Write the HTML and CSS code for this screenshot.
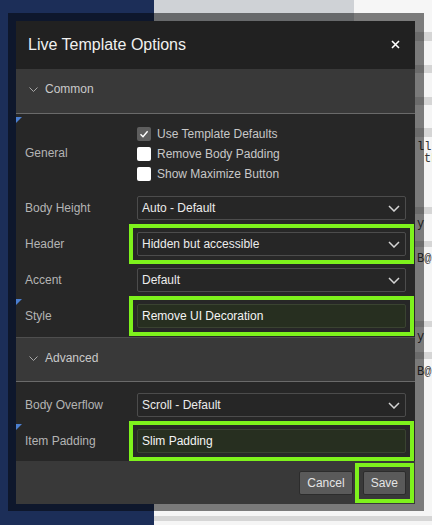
FILE: index.html
```html
<!DOCTYPE html>
<html lang="en">
<head>
<meta charset="utf-8">
<title>Live Template Options</title>
<link rel="stylesheet" href="styles.css">
</head>
<body>
<div class="page">
  <aside class="sidebar"></aside>
  <main class="main">
    <div class="topbar"><div class="tab"></div></div>
    <div class="content">
      <div class="bar h9 mt1"></div>
      <div class="bar h8 mt24"></div>
      <div class="bar h8 mt24"></div>
      <div class="bar h9 mt23"></div>
      <div class="code mt4">ll</div>
      <div class="code indent">th</div>
      <div class="bar h7 mt42"></div>
      <div class="code mt4">y</div>
      <div class="bar h6 mt11"></div>
      <div class="code mt6">B@</div>
      <div class="bar h6 mt56"></div>
      <div class="code mt4">y</div>
      <div class="bar h7 mt9"></div>
      <div class="code mt7">B@</div>
      <div class="bar h5 mt138"></div>
    </div>
  </main>
</div>

<div class="frame">
  <div class="dialog">
    <header class="titlebar">
      <h1 class="title">Live Template Options</h1>
      <button class="close" aria-label="Close">
        <svg width="9" height="9" viewBox="0 0 9 9"><path d="M1 1L8 8M8 1L1 8" stroke="#ffffff" stroke-width="1.6" fill="none"/></svg>
      </button>
    </header>

    <section class="region">
      <div class="region-head">
        <svg class="chev" width="9" height="5" viewBox="0 0 9 5"><path d="M0.5 0.5L4.5 4.5L8.5 0.5" fill="none" stroke="#a8a8a8" stroke-width="1"/></svg>
        <span>Common</span>
      </div>
      <div class="region-body">
        <div class="row row-general">
          <span class="marker"></span>
          <span class="lbl">General</span>
          <div class="checks">
            <div class="check">
              <span class="box checked"><svg width="14" height="14" viewBox="0 0 14 14"><path d="M3.5 7.2L6 9.7L10.6 4.3" fill="none" stroke="#ffffff" stroke-width="1.4"/></svg></span>
              <span>Use Template Defaults</span>
            </div>
            <div class="check"><span class="box"></span><span>Remove Body Padding</span></div>
            <div class="check"><span class="box"></span><span>Show Maximize Button</span></div>
          </div>
        </div>
        <div class="row">
          <span class="lbl">Body Height</span>
          <div class="select"><span>Auto - Default</span><svg width="12" height="7" viewBox="0 0 12 7"><path d="M1 1L6 6L11 1" fill="none" stroke="#d4d4d4" stroke-width="1.5"/></svg></div>
        </div>
        <div class="row">
          <span class="lbl">Header</span>
          <div class="select hl"><span>Hidden but accessible</span><svg width="12" height="7" viewBox="0 0 12 7"><path d="M1 1L6 6L11 1" fill="none" stroke="#d4d4d4" stroke-width="1.5"/></svg></div>
        </div>
        <div class="row">
          <span class="lbl">Accent</span>
          <div class="select"><span>Default</span><svg width="12" height="7" viewBox="0 0 12 7"><path d="M1 1L6 6L11 1" fill="none" stroke="#d4d4d4" stroke-width="1.5"/></svg></div>
        </div>
        <div class="row">
          <span class="marker"></span>
          <span class="lbl">Style</span>
          <div class="field hl"><span>Remove UI Decoration</span></div>
        </div>
      </div>
    </section>

    <section class="region region-second">
      <div class="region-head">
        <svg class="chev" width="9" height="5" viewBox="0 0 9 5"><path d="M0.5 0.5L4.5 4.5L8.5 0.5" fill="none" stroke="#a8a8a8" stroke-width="1"/></svg>
        <span>Advanced</span>
      </div>
      <div class="region-body region-body-adv">
        <div class="row">
          <span class="lbl">Body Overflow</span>
          <div class="select"><span>Scroll - Default</span><svg width="12" height="7" viewBox="0 0 12 7"><path d="M1 1L6 6L11 1" fill="none" stroke="#d4d4d4" stroke-width="1.5"/></svg></div>
        </div>
        <div class="row">
          <span class="marker"></span>
          <span class="lbl">Item Padding</span>
          <div class="field hl"><span>Slim Padding</span></div>
        </div>
      </div>
    </section>

    <footer class="footer">
      <button class="btn">Cancel</button>
      <button class="btn hl">Save</button>
    </footer>
  </div>
</div>
</body>
</html>
```

FILE: styles.css
```css
* { box-sizing: border-box; }

html, body {
  margin: 0;
  padding: 0;
  width: 432px;
  height: 525px;
  overflow: hidden;
  font-family: "Liberation Sans", Arial, Helvetica, sans-serif;
}

.page {
  display: flex;
  width: 432px;
  height: 525px;
}

.sidebar {
  width: 154px;
  flex: none;
  background: #1c2e58;
}

.main {
  flex: 1;
  display: flex;
  flex-direction: column;
  background: #f5f5f5;
  overflow: hidden;
}

.topbar {
  height: 31px;
  flex: none;
  background: #f6f6f6;
  display: flex;
}

.tab {
  width: 200px;
  background: #cfd2d6;
}

.content {
  display: flex;
  flex-direction: column;
  padding-left: 263px;
}

.bar {
  margin-left: -263px;
  background: #d6d6d6;
}
.h5 { height: 5px; }
.h6 { height: 6px; }
.h7 { height: 7px; }
.h8 { height: 8px; }
.h9 { height: 9px; }
.mt1 { margin-top: 1px; }
.mt4 { margin-top: 4px; }
.mt6 { margin-top: 6px; }
.mt7 { margin-top: 7px; }
.mt9 { margin-top: 9px; }
.mt11 { margin-top: 11px; }
.mt23 { margin-top: 23px; }
.mt24 { margin-top: 24px; }
.mt42 { margin-top: 42px; }
.mt56 { margin-top: 56px; }
.mt138 { margin-top: 138px; }

.code {
  font-family: "Liberation Mono", "DejaVu Sans Mono", monospace;
  font-size: 12px;
  line-height: 12px;
  color: #3a3a3a;
  white-space: nowrap;
}
.indent { padding-left: 7px; }

/* overlay frame around dialog */
.frame {
  position: absolute;
  left: 8px;
  top: 13px;
  width: 416px;
  height: 498px;
  padding: 8px 9px 7px 8px;
  background: rgba(0, 0, 0, 0.5);
}

.dialog {
  width: 399px;
  height: 483px;
  display: flex;
  flex-direction: column;
  background: #272727;
}

.titlebar {
  height: 48px;
  flex: none;
  background: #212121;
  display: flex;
  align-items: center;
  justify-content: space-between;
  padding: 0 14px 0 12px;
}

.title {
  margin: 0;
  font-size: 16px;
  font-weight: normal;
  color: #f0f0f0;
}

.close {
  border: 0;
  background: none;
  padding: 0;
  width: 11px;
  height: 11px;
  display: flex;
  align-items: center;
  justify-content: center;
  margin-bottom: 2px;
}

.region-head {
  height: 45px;
  background: #393939;
  border-bottom: 1px solid #6a6a6a;
  display: flex;
  align-items: center;
  padding-left: 13px;
  gap: 7px;
  font-size: 12px;
  color: #c9c9c9;
  padding-bottom: 4px;
}

.chev { margin-top: 1px; }

.region-second .region-head {
  border-top: 1px solid #4e4e4e;
}

.region-body {
  padding: 2px 0 3px;
  background: #272727;
}

.region-body-adv {
  padding: 5px 0 2px;
}

.row {
  position: relative;
  display: grid;
  grid-template-columns: 121px 1fr;
  align-items: center;
  height: 36px;
  padding-right: 9px;
}

.row-general {
  height: 74px;
}

.marker {
  position: absolute;
  left: 0;
  top: 1px;
  width: 0;
  height: 0;
  border-top: 6px solid #4b7fd1;
  border-right: 6px solid transparent;
}

.lbl {
  padding-left: 9px;
  font-size: 12px;
  color: #b4b4b4;
}

.checks {
  display: flex;
  flex-direction: column;
  padding-top: 1px;
}

.check {
  height: 20px;
  display: flex;
  align-items: center;
  gap: 6px;
  font-size: 12px;
  color: #c8c8c8;
}

.box {
  width: 14px;
  height: 14px;
  border-radius: 2px;
  background: #ffffff;
  display: flex;
}

.box.checked {
  background: #5e5e5e;
}

.select,
.field {
  height: 24px;
  border: 1px solid #4c4c4c;
  border-radius: 2px;
  background: #262626;
  display: flex;
  align-items: center;
  justify-content: space-between;
  padding: 0 5px 0 4px;
  font-size: 12px;
  color: #ececec;
}

.field {
  background: #272f20;
  border-color: #3a4331;
  color: #f4f4f4;
}

.hl {
  position: relative;
}

.hl::after {
  content: "";
  position: absolute;
  top: -9px;
  left: -9px;
  right: -9px;
  bottom: -9px;
  border: 4px solid #7ef21c;
  pointer-events: none;
}

.footer {
  flex: 1;
  background: #393939;
  display: flex;
  justify-content: flex-end;
  align-items: center;
  gap: 10px;
  padding: 0 9px;
}

.btn {
  height: 24px;
  border: 1px solid #2c2c2c;
  border-radius: 2px;
  background: #5a5a5a;
  color: #e4e4e4;
  font-family: "Liberation Sans", Arial, Helvetica, sans-serif;
  font-size: 12px;
  padding: 0 7px;
}
```
